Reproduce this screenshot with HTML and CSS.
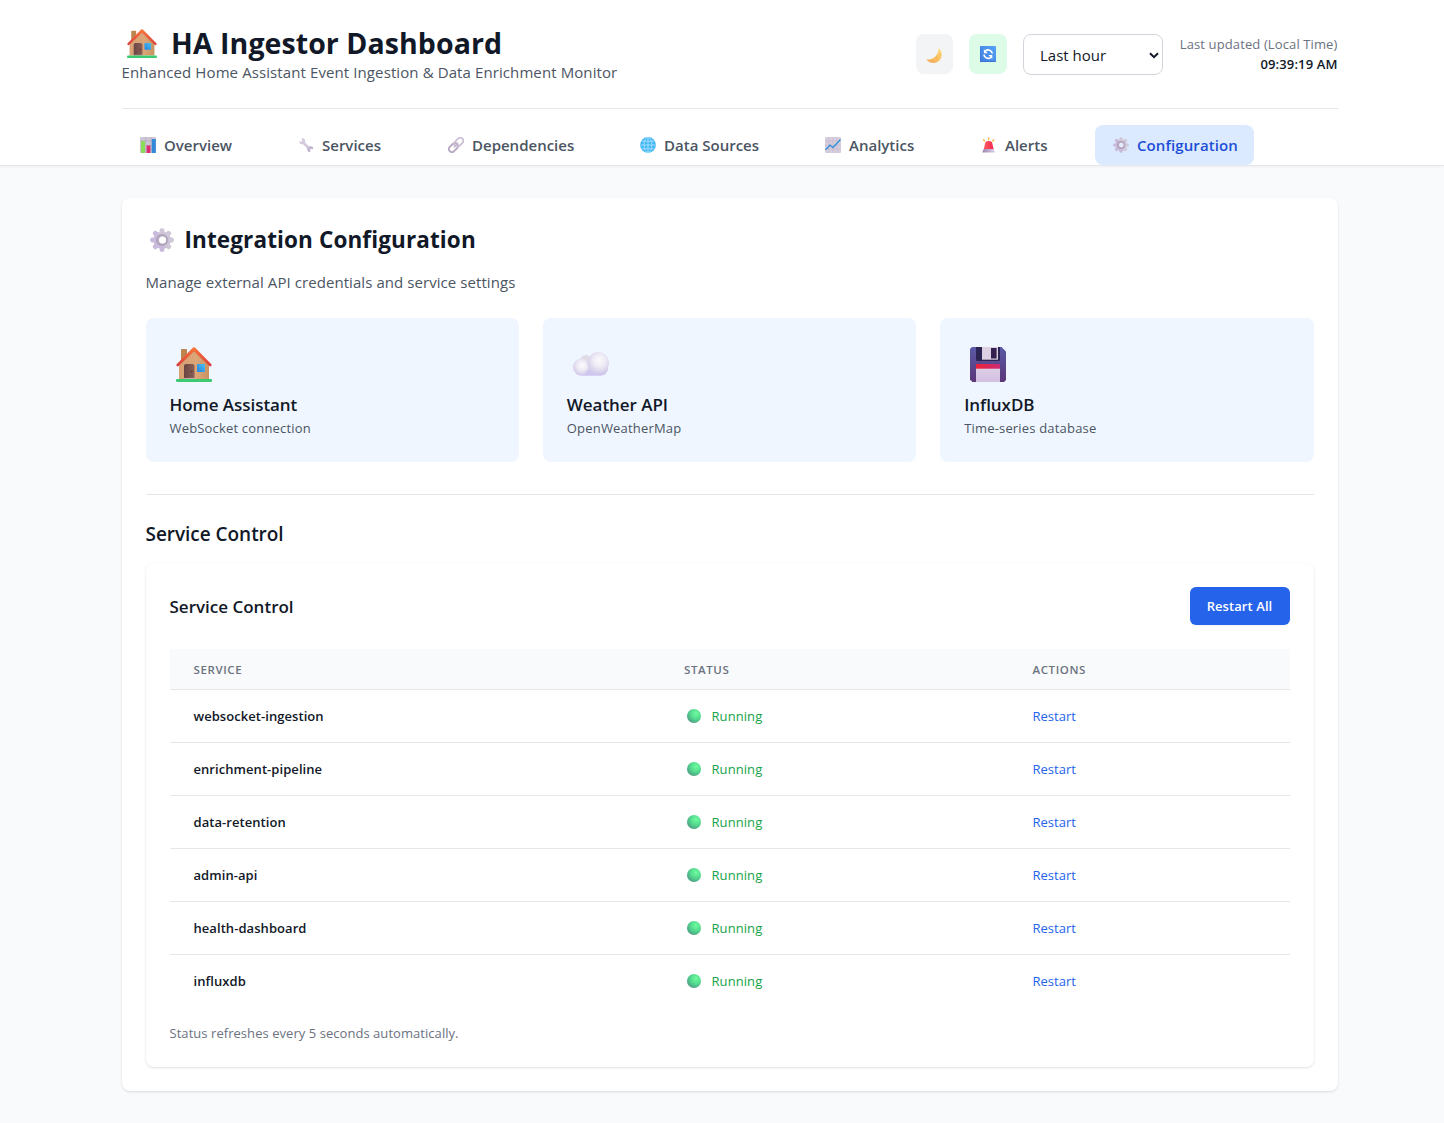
FILE: index.html
```html
<!DOCTYPE html>
<html lang="en">
<head>
<meta charset="utf-8">
<title>HA Ingestor Dashboard</title>
<link rel="stylesheet" href="styles.css">
</head>
<body>
<svg class="sprite" aria-hidden="true">
  <defs>
    <linearGradient id="g-wall" x1="0" x2="1"><stop offset="0" stop-color="#d9a274"/><stop offset=".6" stop-color="#dba578"/><stop offset="1" stop-color="#c8935f"/></linearGradient>
    <linearGradient id="g-roof" x1="0" y1="0" x2="0" y2="1"><stop offset="0" stop-color="#f97a3c"/><stop offset="1" stop-color="#d93a3c"/></linearGradient>
    <linearGradient id="g-door" x1="0" x2="1"><stop offset="0" stop-color="#6b4544"/><stop offset="1" stop-color="#8a5f55"/></linearGradient>
    <linearGradient id="g-win" x1="0" y1="1" x2="1" y2="0"><stop offset="0" stop-color="#2483dc"/><stop offset="1" stop-color="#4cc0f5"/></linearGradient>
    <linearGradient id="g-moon" x1="0" y1="1" x2="1" y2="0"><stop offset="0" stop-color="#f0a860"/><stop offset=".5" stop-color="#f9c05e"/><stop offset="1" stop-color="#ffe08a"/></linearGradient>
    <linearGradient id="g-blue" x1="0" y1="1" x2="1" y2="0"><stop offset="0" stop-color="#3f7de0"/><stop offset="1" stop-color="#55a2f6"/></linearGradient>
    <linearGradient id="g-gear" x1="0" y1="0" x2="0" y2="1"><stop offset="0" stop-color="#d0c9d8"/><stop offset="1" stop-color="#c8b8dd"/></linearGradient>
    <linearGradient id="g-cloud" x1="0" y1="0" x2="0" y2="1"><stop offset="0" stop-color="#d9d7df"/><stop offset="1" stop-color="#cfc4ee"/></linearGradient>
    <radialGradient id="g-puff" cx=".55" cy=".4" r=".62"><stop offset="0" stop-color="#fbfafd"/><stop offset=".45" stop-color="#efecf5"/><stop offset="1" stop-color="#d2c9ea"/></radialGradient>
    <linearGradient id="g-disk" x1="0" y1="0" x2="0" y2="1"><stop offset="0" stop-color="#5a5aa6"/><stop offset="1" stop-color="#5b3678"/></linearGradient>
    <linearGradient id="g-strip" x1="0" x2="1"><stop offset="0" stop-color="#ee2234"/><stop offset="1" stop-color="#c92b77"/></linearGradient>
    <linearGradient id="g-paper" x1="0" y1="0" x2="0" y2="1"><stop offset="0" stop-color="#dccfe6"/><stop offset="1" stop-color="#d3bfe2"/></linearGradient>
    <radialGradient id="g-dot" cx=".65" cy=".32" r=".8"><stop offset="0" stop-color="#6ffba0"/><stop offset=".5" stop-color="#53d98e"/><stop offset="1" stop-color="#4a9080"/></radialGradient>
    <linearGradient id="g-siren" x1="0" x2="1"><stop offset="0" stop-color="#ff5b62"/><stop offset="1" stop-color="#f0284c"/></linearGradient>
    <linearGradient id="g-base" x1="0" x2="1"><stop offset="0" stop-color="#9c84ae"/><stop offset="1" stop-color="#e0d2f0"/></linearGradient>
  </defs>
  <symbol id="house" viewBox="0 0 36 35">
    <path d="M5 2.6Q5 2 5.8 2H10Q11 2 11 3V16H5z" fill="#bd8450"/>
    <path d="M3 17L18 3L33 17V32H3z" fill="url(#g-wall)"/>
    <path d="M8 19Q8 17 10 17H16.500Q18.500 17 18.500 19V32H8z" fill="url(#g-door)"/>
    <circle cx="15.800" cy="24.500" r=".7" fill="#452b2a"/>
    <rect x="21" y="17" width="8" height="8" rx=".5" fill="url(#g-win)"/>
    <path d="M.4 17.500L17 .6Q18 -.2 19 .6L35.600 17.500Q36 19.500 34 19.600L18 4.600L2 19.600Q0 19.500 .4 17.500z" fill="url(#g-roof)"/>
    <path d="M8 31.200H19V32H8z" fill="#d9c5c5"/>
    <rect y="32" width="36" height="3" rx="1" fill="#3ccb72"/>
  </symbol>
  <symbol id="moon" viewBox="0 0 16 16">
    <path d="M12.500 .3C16.600 3 17 9 13.200 12.700C9.500 16.200 3 16 .3 11.300C3.500 12.200 6.800 11 9.300 8.600C11.700 6 12.500 3.500 12.500 .3z" fill="url(#g-moon)"/>
    <path d="M10 9.500l1.200-.6M6 13.500l1.300-.6M13.500 7l.5-1" stroke="#eba24f" stroke-width=".9"/>
  </symbol>
  <symbol id="refresh" viewBox="0 0 16 16">
    <rect width="16" height="16" rx="1" fill="url(#g-blue)"/>
    <path d="M0 .5V15.500H16" fill="none" stroke="#366fca" stroke-width=".8"/>
    <path d="M5.300 5A4.200 4.200 0 0 1 12.300 7.500M10.900 11.300A4.200 4.200 0 0 1 3.900 8.600" fill="none" stroke="#fff" stroke-width="1.600"/>
    <path d="M3.900 3.300V7.200H7.800zM12.300 13V9.100H8.400z" fill="#fff"/>
  </symbol>
  <symbol id="bars" viewBox="0 0 16 16">
    <rect width="16" height="16" rx="1" fill="#cdc6d6"/>
    <path d="M0 4H16M0 8.500H16M0 12.500H16M5.700 0V16M11 0V16" stroke="#afa5bb" stroke-width=".6"/>
    <rect x="1" y="4" width="4" height="12" fill="#89dc58"/>
    <rect x="6.600" y="8.500" width="3.800" height="7.500" fill="#dc2c70"/>
    <rect x="11.800" y="2" width="4" height="14" fill="#3189d9"/>
  </symbol>
  <symbol id="wrench" viewBox="0 0 16 16">
    <path d="M4.500 4.800L11.800 12" stroke="#cfc5da" stroke-width="2.700"/>
    <path d="M3.600 1.200A3 3 0 1 1 1.200 4.200L3.600 4.700L4.400 3.400z" fill="#d3c9dd"/>
    <path d="M12.500 15.200A3 3 0 1 1 15.300 12.300L13 11.800L12 13.200z" fill="#bfb0ce"/>
    <path d="M5.600 5L12 11.500" stroke="#e5dfeb" stroke-width=".8"/>
  </symbol>
  <symbol id="link" viewBox="0 0 17 17">
    <g fill="none" transform="rotate(-45 8.500 8.500)">
      <rect x="-.8" y="5.300" width="10.800" height="6.400" rx="3.200" stroke="#b9a8c2" stroke-width="2"/>
      <rect x="7.200" y="5.300" width="10.800" height="6.400" rx="3.200" stroke="#cfc1d5" stroke-width="2"/>
      <path d="M5 8.500H12" stroke="#c4b5cc" stroke-width="1.300"/>
    </g>
  </symbol>
  <symbol id="globe" viewBox="0 0 17 17">
    <circle cx="8.500" cy="8.500" r="8.400" fill="#45b7f5"/>
    <path d="M8.500 .5V16.500M.5 8.500H16.500M1.800 4.500H15.200M1.800 12.500H15.200" stroke="#b5e8ff" stroke-width=".8"/>
    <ellipse cx="8.500" cy="8.500" rx="4.200" ry="8" fill="none" stroke="#b5e8ff" stroke-width=".8"/>
  </symbol>
  <symbol id="trend" viewBox="0 0 16 16">
    <rect width="16" height="16" rx="1" fill="#d7cedd"/>
    <path d="M0 4H16M0 8H16M0 12H16M4 0V16M8 0V16M12 0V16" stroke="#bdb2c8" stroke-width=".5"/>
    <path d="M.5 12.800L5 8.200L8 10.500L15.500 2.500" fill="none" stroke="#3590d8" stroke-width="1.400"/>
  </symbol>
  <symbol id="siren" viewBox="0 0 16 16">
    <path d="M2.200 2.200L4 4.500M7.700 .3V3.200M13.200 2.200L11.400 4.500" stroke="#f8bd4e" stroke-width="1.400"/>
    <path d="M4.200 6Q4.500 4 7.700 4Q11 4 11.200 6L12.700 12.500H2.700z" fill="url(#g-siren)"/>
    <path d="M2.700 12H12.700L14.200 15.500H1.200z" fill="url(#g-base)"/>
  </symbol>
  <symbol id="gear" viewBox="0 0 24 24">
    <g fill="url(#g-gear)">
      <circle cx="12" cy="12" r="8.800"/>
      <rect x="9.600" y=".2" width="4.800" height="23.600" rx="1.900"/>
      <rect x="9.600" y=".2" width="4.800" height="23.600" rx="1.900" transform="rotate(45 12 12)"/>
      <rect x="9.600" y=".2" width="4.800" height="23.600" rx="1.900" transform="rotate(90 12 12)"/>
      <rect x="9.600" y=".2" width="4.800" height="23.600" rx="1.900" transform="rotate(135 12 12)"/>
    </g>
    <circle cx="12" cy="12" r="4.900" fill="none" stroke="#b0a4ba" stroke-width="2.400"/>
    <circle cx="12.600" cy="12" r="3.500" fill="currentColor"/>
  </symbol>
  <symbol id="cloud" viewBox="0 0 36 24">
    <circle cx="13" cy="9" r="6" fill="#dddce2"/>
    <rect x="1" y="10" width="34" height="13.500" rx="6.700" fill="url(#g-cloud)"/>
    <circle cx="8.200" cy="15" r="8.200" fill="url(#g-puff)"/>
    <circle cx="25.300" cy="10.700" r="10.700" fill="url(#g-puff)"/>
    <path d="M8 23.300C13 23.300 14 19 14.500 17C17 21 20 22 27 21.500L28 23.500H8z" fill="#d1c7ee"/>
  </symbol>
  <symbol id="disk" viewBox="0 0 36 35">
    <path d="M2 0H31.500L36 4.500V33L34 35H2.500L0 32.500V2z" fill="url(#g-disk)"/>
    <path d="M6 0H30V12.500Q30 14 28.500 14H7.500Q6 14 6 12.500z" fill="#2c2452"/>
    <path d="M12 0H28V12.700H12z" fill="#dcd0e2"/>
    <path d="M21 1H26.600V11.500H21z" fill="#35204f"/>
    <path d="M6 17H30V22H6z" fill="url(#g-strip)"/>
    <path d="M6 21.700H30V35H6z" fill="url(#g-paper)"/>
  </symbol>
  <symbol id="dot" viewBox="0 0 14 14"><circle cx="7" cy="7" r="7" fill="url(#g-dot)"/></symbol>
</svg>

<header class="header">
  <div class="container">
    <div class="header-top">
      <div>
        <h1 class="title"><svg class="title-icon"><use href="#house"/></svg><span>HA Ingestor Dashboard</span></h1>
        <p class="subtitle">Enhanced Home Assistant Event Ingestion &amp; Data Enrichment Monitor</p>
      </div>
      <div class="tools">
        <button class="tool tool-theme" aria-label="Toggle theme"><svg class="icon"><use href="#moon"/></svg></button>
        <button class="tool tool-refresh" aria-label="Auto refresh"><svg class="icon"><use href="#refresh"/></svg></button>
        <div class="range" role="button"><span>Last hour</span><svg class="chevron" viewBox="0 0 10 7"><path d="M1 1.200L5 5.200L9 1.200" fill="none" stroke="#111827" stroke-width="2"/></svg></div>
        <div class="updated"><div class="updated-label">Last updated (Local Time)</div><div class="updated-time">09:39:19 AM</div></div>
      </div>
    </div>
    <nav class="nav">
      <a class="tab"><svg class="icon"><use href="#bars"/></svg><span>Overview</span></a>
      <a class="tab"><svg class="icon"><use href="#wrench"/></svg><span>Services</span></a>
      <a class="tab"><svg class="icon"><use href="#link"/></svg><span>Dependencies</span></a>
      <a class="tab"><svg class="icon"><use href="#globe"/></svg><span>Data Sources</span></a>
      <a class="tab"><svg class="icon"><use href="#trend"/></svg><span>Analytics</span></a>
      <a class="tab"><svg class="icon"><use href="#siren"/></svg><span>Alerts</span></a>
      <a class="tab tab-active"><svg class="icon gear-tab"><use href="#gear"/></svg><span>Configuration</span></a>
    </nav>
  </div>
</header>

<main class="container main">
  <section class="panel">
    <h2 class="panel-title"><svg class="panel-icon"><use href="#gear"/></svg><span>Integration Configuration</span></h2>
    <p class="panel-lead">Manage external API credentials and service settings</p>
    <div class="cards">
      <article class="card"><div class="card-icon"><svg class="big"><use href="#house"/></svg></div><h3 class="card-title">Home Assistant</h3><p class="card-text">WebSocket connection</p></article>
      <article class="card"><div class="card-icon"><svg class="big big-cloud"><use href="#cloud"/></svg></div><h3 class="card-title">Weather API</h3><p class="card-text">OpenWeatherMap</p></article>
      <article class="card"><div class="card-icon"><svg class="big"><use href="#disk"/></svg></div><h3 class="card-title">InfluxDB</h3><p class="card-text">Time-series database</p></article>
    </div>
    <div class="control">
      <h3 class="control-heading">Service Control</h3>
      <div class="control-box">
        <div class="control-head"><h3 class="control-title">Service Control</h3><button class="restart-all">Restart All</button></div>
        <table class="table">
          <thead><tr><th class="col-service">Service</th><th class="col-status">Status</th><th>Actions</th></tr></thead>
          <tbody>
            <tr><td class="name">websocket-ingestion</td><td><span class="status"><svg class="dot"><use href="#dot"/></svg>Running</span></td><td><a class="restart">Restart</a></td></tr>
            <tr><td class="name">enrichment-pipeline</td><td><span class="status"><svg class="dot"><use href="#dot"/></svg>Running</span></td><td><a class="restart">Restart</a></td></tr>
            <tr><td class="name">data-retention</td><td><span class="status"><svg class="dot"><use href="#dot"/></svg>Running</span></td><td><a class="restart">Restart</a></td></tr>
            <tr><td class="name">admin-api</td><td><span class="status"><svg class="dot"><use href="#dot"/></svg>Running</span></td><td><a class="restart">Restart</a></td></tr>
            <tr><td class="name">health-dashboard</td><td><span class="status"><svg class="dot"><use href="#dot"/></svg>Running</span></td><td><a class="restart">Restart</a></td></tr>
            <tr><td class="name">influxdb</td><td><span class="status"><svg class="dot"><use href="#dot"/></svg>Running</span></td><td><a class="restart">Restart</a></td></tr>
          </tbody>
        </table>
        <p class="note">Status refreshes every 5 seconds automatically.</p>
      </div>
    </div>
  </section>
</main>
</body>
</html>
```
FILE: styles.css
```css
*, *::before, *::after { box-sizing: border-box; }
body { margin: 0; min-height: 1123px; background: #f9fafb; color: #111827; font-family: "Open Sans", "Noto Sans", sans-serif; font-size: 15px; line-height: 24px; }
h1, h2, h3, p { margin: 0; }
button { font: inherit; border: 0; padding: 0; }
.sprite { position: absolute; width: 0; height: 0; }
svg { display: block; flex: none; color: #fff; }
.container { width: 1216px; margin-left: 121.5px; }

.header { height: 166px; background: #fff; border-bottom: 1px solid #e5e7eb; box-shadow: 0 1px 2px rgba(0, 0, 0, .05); }
.header-top { display: flex; justify-content: space-between; height: 109px; padding-top: 24px; border-bottom: 1px solid #e5e7eb; }
.title { display: flex; align-items: center; gap: 14px; height: 36px; padding: 2px 0 0 5.5px; font-size: 28.5px; font-weight: 700; line-height: 36px; letter-spacing: .07px; white-space: nowrap; }
.title-icon { width: 30px; height: 29px; }
.subtitle { color: #4b5563; letter-spacing: .1px; white-space: nowrap; }
.tools { display: flex; align-items: flex-start; gap: 16px; padding-top: 10px; }
.tool { display: flex; justify-content: center; align-items: center; height: 40px; border-radius: 8px; }
.tool-theme { width: 37px; background: #f3f4f6; padding-top: 4px; }
.tool-refresh { width: 38px; background: #dcfce7; }
.icon { width: 16px; height: 16px; }
.range { display: flex; align-items: center; justify-content: space-between; width: 140px; height: 41px; padding: 1px 3px 0 16.5px; border: 1px solid #d1d5db; border-radius: 8px; background: #fff; }
.chevron { width: 10px; height: 7px; color: #111827; }
.updated { width: 159px; font-size: 13px; line-height: 20px; letter-spacing: .12px; text-align: right; white-space: nowrap; }
.updated-label { color: #6b7280; }
.updated-time { font-weight: 600; }

.nav { display: grid; grid-template-columns: 126px 118px 160px 153px 124px 100px 159px; gap: 32px; padding-top: 16px; }
.tab { display: flex; align-items: center; gap: 8px; height: 40px; padding-left: 18.5px; border-radius: 8px; color: #4b5563; font-weight: 600; white-space: nowrap; }
.tab-active { background: #dbeafe; color: #1d4ed8; letter-spacing: .1px; }
.gear-tab { color: #e4ecfb; }

.main { padding-top: 32px; }
.panel { height: 893px; padding: 24px; border-radius: 8px; background: #fff; box-shadow: 0 1px 3px rgba(0, 0, 0, .1), 0 1px 2px -1px rgba(0, 0, 0, .1); }
.panel-title { display: flex; align-items: center; gap: 11px; height: 32px; margin-bottom: 16px; padding: 3px 0 0 4px; font-size: 22.5px; font-weight: 700; line-height: 32px; letter-spacing: .12px; }
.panel-icon { width: 24px; height: 24px; }
.panel-lead { margin-bottom: 24px; color: #4b5563; letter-spacing: .07px; }
.cards { display: grid; grid-template-columns: repeat(3, 1fr); gap: 24px; }
.card { height: 144px; padding: 24px; border-radius: 8px; background: #eff6ff; }
.card-icon { display: flex; align-items: center; height: 49px; padding: 0 0 4px 6px; }
.big { width: 36px; height: 35px; }
.big-cloud { height: 24px; margin-bottom: 1px; }
.card-title { height: 27px; font-size: 17px; font-weight: 600; line-height: 28px; letter-spacing: -.05px; }
.card-text { color: #4b5563; font-size: 13px; line-height: 20px; letter-spacing: .18px; }

.control { margin-top: 32px; padding-top: 25px; border-top: 1px solid #e5e7eb; }
.control-heading { margin-bottom: 15px; font-size: 19px; font-weight: 600; line-height: 28px; letter-spacing: -.04px; }
.control-box { height: 504px; padding: 24px; border-radius: 8px; background: #fff; box-shadow: 0 1px 3px rgba(0, 0, 0, .1), 0 1px 2px -1px rgba(0, 0, 0, .1); }
.control-head { display: flex; justify-content: space-between; align-items: center; height: 38px; margin-bottom: 24px; }
.control-title { padding-top: 2px; font-size: 17px; font-weight: 600; line-height: 28px; }
.restart-all { width: 100px; height: 38px; border-radius: 6px; background: #2563eb; box-shadow: 0 1px 2px rgba(0, 0, 0, .05); color: #fff; font-size: 13px; font-weight: 600; letter-spacing: .08px; }
.table { width: 1120px; border-collapse: collapse; table-layout: fixed; font-size: 13px; line-height: 20px; }
.table th { height: 40px; padding: 2px 24px 0; background: #f9fafb; color: #6b7280; font-size: 11.5px; font-weight: 600; letter-spacing: .6px; text-align: left; text-transform: uppercase; }
.col-service { width: 490.500px; }
.col-status { width: 348.500px; }
.table td { height: 53px; padding: 0 24px; border-top: 1px solid #e5e7eb; }
.table .name { font-weight: 600; letter-spacing: .06px; }
.status { display: flex; align-items: center; gap: 11px; padding-left: 2.5px; color: #16a34a; letter-spacing: .08px; }
.dot { width: 14px; height: 14px; }
.restart { color: #2563eb; }
.note { margin-top: 16px; color: #6b7280; font-size: 13px; line-height: 20px; letter-spacing: .05px; }
```
